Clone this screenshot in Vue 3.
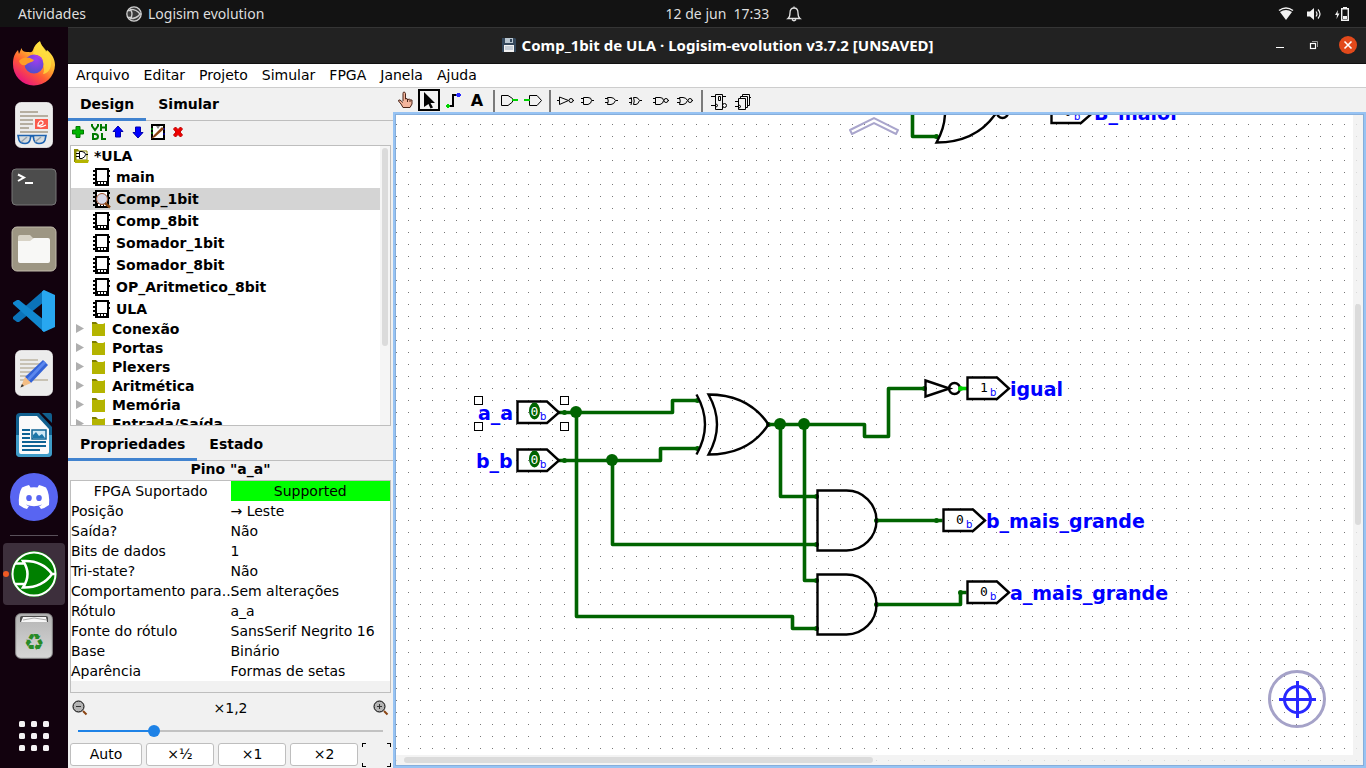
<script setup>
import { ref } from 'vue'

const menus = ['Arquivo', 'Editar', 'Projeto', 'Simular', 'FPGA', 'Janela', 'Ajuda']
const circuits = ['main', 'Comp_1bit', 'Comp_8bit', 'Somador_1bit', 'Somador_8bit', 'OP_Aritmetico_8bit', 'ULA']
const current = ref('Comp_1bit')
const libraries = ['Conexão', 'Portas', 'Plexers', 'Aritmética', 'Memória', 'Entrada/Saída']
const attributes = [
  ['Posição', '→ Leste'],
  ['Saída?', 'Não'],
  ['Bits de dados', '1'],
  ['Tri-state?', 'Não'],
  ['Comportamento para...', 'Sem alterações'],
  ['Rótulo', 'a_a'],
  ['Fonte do rótulo', 'SansSerif Negrito 16'],
  ['Base', 'Binário'],
  ['Aparência', 'Formas de setas'],
]
const zoom = ref(24)

const wires = [
  'M558 412H672V400H697',
  'M576 412V616H792V628H817',
  'M558 460H660V448H697',
  'M612 460V544H817',
  'M768 424H864V436H888V388H924',
  'M780 424V496H817',
  'M804 424V580H817',
  'M876 520H942',
  'M876 604H960V592H966',
  'M912 100V136H937',
]
const joints = [[576, 412], [612, 460], [780, 424], [804, 424]]
const ends = [
  [564, 412], [564, 460], [697, 400], [697, 448], [768, 424], [924, 388], [816, 496], [816, 544],
  [816, 580], [816, 628], [876, 520], [936, 520], [876, 604], [960, 592], [936, 136],
]
const inputs = [
  { x: 517, y: 412, label: 'a_a', lx: 478 },
  { x: 517, y: 460, label: 'b_b', lx: 476 },
]
const outputs = [
  { x: 967, y: 388, label: 'igual', value: '1' },
  { x: 943, y: 520, label: 'b_mais_grande', value: '0' },
  { x: 967, y: 592, label: 'a_mais_grande', value: '0' },
  { x: 1051, y: 112, label: 'B_maior', value: '0' },
]
const handles = [[474, 396], [560, 396], [474, 422], [560, 422]]
</script>

<template>
  <div class="desktop">
    <header class="topbar">
      <div class="top-left">
        <button class="plain">Atividades</button>
        <button class="plain app-name">
          <svg width="16" height="16" viewBox="0 0 48 48">
            <circle cx="24" cy="24" r="21.500" fill="#3c3c3c" stroke="#d0d0d0" stroke-width="4" />
            <path d="M5 14H15M5 34H15M13 10Q23 24 13 38Q32 38 42 24Q32 10 13 10ZM42 24H46" fill="none" stroke="#d0d0d0" stroke-width="4" />
          </svg>
          Logisim evolution
        </button>
      </div>
      <button class="plain clock">
        <span>12 de jun&nbsp; 17:33</span>
        <svg width="16" height="16" viewBox="0 0 16 16" fill="none" stroke="#e2e2e2" stroke-width="1.300">
          <path d="M2 12.500C4 11 4 9.500 4 7C4 3.500 5.500 2 8 2S12 3.500 12 7C12 9.500 12 11 14 12.500ZM6 13.500Q8 16 10 13.500M8 2V.5" />
        </svg>
      </button>
      <button class="plain tray" aria-label="Sistema">
        <svg width="16" height="16" viewBox="0 0 16 16"><path d="M1 4.500Q8-.5 15 4.500" fill="none" stroke="#f2f2f2" stroke-width="1.500" /><path d="M2 6Q8 2 14 6L8 14Z" fill="#f2f2f2" /></svg>
        <svg width="16" height="16" viewBox="0 0 16 16"><path d="M1 5.500H4L8 2V14L4 10.500H1Z" fill="#f2f2f2" /><path d="M10 5.500Q12 8 10 10.500M12 3.500Q16 8 12 12.500" fill="none" stroke="#f2f2f2" stroke-width="1.200" /></svg>
        <svg width="16" height="16" viewBox="0 0 16 16"><path d="M4 4L1 9H3L2.500 13L5.500 7.500H3.500Z" fill="#f2f2f2" /><path d="M7.700 2.700H14.300V14.300H7.700Z" fill="none" stroke="#f2f2f2" stroke-width="1.400" /><path d="M9 1H13V2H9ZM9 10H13V13H9Z" fill="#f2f2f2" /></svg>
      </button>
    </header>

    <div class="below">
      <nav class="dock">
        <button class="dock-item" aria-label="Firefox">
          <svg viewBox="0 0 48 48">
            <defs>
              <linearGradient id="fx" x1=".85" y1=".1" x2=".25" y2=".95"><stop offset="0" stop-color="#fff04a" /><stop offset=".35" stop-color="#ffb52c" /><stop offset=".65" stop-color="#ff5b34" /><stop offset="1" stop-color="#e8157f" /></linearGradient>
              <radialGradient id="fxg" cx=".6" cy=".25" r=".8"><stop offset="0" stop-color="#a13df0" /><stop offset="1" stop-color="#4c50c8" /></radialGradient>
            </defs>
            <path d="M3 25C3 18 5 14 8 11L9 15L11.500 9Q12 13 17 13C20 13 22 14 23 11C24 7 27 4 30 2.300C31 7 35 10 36 13L37 11C42 15 45 20 45 26A21 21 0 0 1 3 25Z" fill="url(#fx)" />
            <path d="M23 16C24 8 27 4 30 2.300C31 8 40 13 41 22C42 30 37 35 33 35C36 29 33 20 23 16Z" fill="#ffe040" opacity=".75" />
            <circle cx="24" cy="25" r="9.500" fill="url(#fxg)" />
            <path d="M9 22C12 18 18 17 24 21C22 24 18 23 16 26C12 27 10 25 9 22Z" fill="#ff9d28" />
            <path d="M23 16Q31 15 33 22L29 19Z" fill="#b13ce8" />
          </svg>
        </button>
        <button class="dock-item" aria-label="Visualizador de documentos">
          <svg viewBox="0 0 48 48">
            <rect x="5.700" y="1.700" width="36.600" height="44.600" rx="5" fill="#ececec" stroke="#fafafa" />
            <path d="M10 11H28M10 15H38M10 19H23M10 23H23M10 27H19M10 31H38" stroke="#b5aea0" stroke-width="2" />
            <rect x="25" y="18" width="13" height="10" fill="#fb5a4c" />
            <path d="M27 25Q34 24 33 21Q30 18 28 23Q28 28 36 24" fill="none" stroke="#fff" stroke-width="1.200" />
            <path d="M8 34.500H21L20 39Q19 42.500 15 42.500Q10 42.500 9 39ZM23 34.500H36L35 39Q34 42.500 29 42.500Q25 42.500 24 39ZM20 36Q22 34 24 36" fill="#d5dadd" stroke="#1e63b0" stroke-width="1.600" />
            <path d="M11 41L17 36M25 41L31 36" stroke="#98a4ad" stroke-width="1.500" />
          </svg>
        </button>
        <button class="dock-item" aria-label="Terminal">
          <svg viewBox="0 0 48 48">
            <rect x="2" y="6" width="44" height="36" rx="4" fill="#4c4c4c" stroke="#777" />
            <path d="M8 11.500L14 14.500L8 18M15 20H23" fill="none" stroke="#fff" stroke-width="2" />
          </svg>
        </button>
        <button class="dock-item" aria-label="Arquivos">
          <svg viewBox="0 0 48 48">
            <rect x="2" y="2" width="44" height="44" rx="5" fill="#9d9683" stroke="#c2bcac" />
            <path d="M8 12Q8 10 10 10H20L23 13H30V20H8Z" fill="#d8d3c6" />
            <path d="M8 16H20L24 13H38Q40 13 40 15V36Q40 38 38 38H10Q8 38 8 36Z" fill="#f8f8f6" />
          </svg>
        </button>
        <button class="dock-item" aria-label="Visual Studio Code">
          <svg viewBox="0 0 48 48">
            <path d="M34 3L3 30V32L7 35L9 35L34 15Z" fill="#0b73b9" />
            <path d="M3 17V15.500L7 13H9L34 33V45Z" fill="#1187cf" />
            <path d="M34 3L45 8V40L34 45L32 43.500V4.500Z" fill="#28a7f0" />
          </svg>
        </button>
        <button class="dock-item" aria-label="Editor de texto">
          <svg viewBox="0 0 48 48">
            <rect x="5.700" y="1.700" width="36.600" height="44.600" rx="5" fill="#ececec" stroke="#fafafa" />
            <path d="M10 11H28M10 15H32M10 19H26M10 23H22M10 27H18M10 31H38" stroke="#c8c2b4" stroke-width="2" />
            <path d="M33 11L38 16L21 34L15 28Z" fill="#3563d6" /><path d="M34 12L36 14L19 32L17 30Z" fill="#5b87ee" />
            <path d="M15 28L21 34L10.500 38.500Z" fill="#f3bd84" /><path d="M12 35L14 37L10.500 38.500Z" fill="#333" />
          </svg>
        </button>
        <button class="dock-item" aria-label="LibreOffice Writer">
          <svg viewBox="0 0 48 48">
            <path d="M10 2H29L42 16V42Q42 46 38 46H10Q6 46 6 42V6Q6 2 10 2Z" fill="#11608f" />
            <path d="M6 24H42V42Q42 46 38 46H10Q6 46 6 42Z" fill="#3f9cc8" />
            <path d="M11 5H27L39 18V41Q39 43 37 43H11Q9 43 9 41V7Q9 5 11 5Z" fill="#fafafa" />
            <path d="M32 2H40Q42 2 42 5V12Z" fill="#11608f" />
            <path d="M12 19H20M12 23H20M12 27H20M12 31H36M12 35H36M12 39H30" stroke="#0f6394" stroke-width="2" />
            <rect x="22" y="19" width="14" height="9" fill="#cfe8f5" stroke="#0f6394" stroke-width="1.500" />
            <path d="M23 27V24L26 21L29 25L32 23L35 27Z" fill="#1c75a8" />
          </svg>
        </button>
        <button class="dock-item" aria-label="Discord">
          <svg viewBox="0 0 48 48">
            <circle cx="24" cy="24" r="24" fill="#5865f2" />
            <path d="M19 12L20.500 14.500Q24 14 27.500 14.500L29 12Q32 12.500 36 14.500Q40 21 39 32Q35 35 31 36L29 33Q31 32.500 32 31.500Q24 35 16 31.500Q17 32.500 19 33L17 36Q13 35 9 32Q8 21 12 14.500Q16 12.500 19 12Z" fill="#fff" />
            <ellipse cx="19" cy="25" rx="2.800" ry="3.100" fill="#5865f2" /><ellipse cx="29" cy="25" rx="2.800" ry="3.100" fill="#5865f2" />
          </svg>
        </button>
        <hr />
        <button class="dock-item active" aria-label="Logisim evolution">
          <svg viewBox="0 0 48 48">
            <circle cx="24" cy="24" r="22.500" fill="#008000" stroke="#0a8a0a" />
            <circle cx="24" cy="24" r="21.500" fill="none" stroke="#fff" stroke-width="2" />
            <path d="M5 13.500H15M5 34H15M13 11Q22 24 13 37.500Q32 38 42 24Q32 10 13 11ZM42 24H46" fill="none" stroke="#fff" stroke-width="2.500" />
          </svg>
        </button>
        <button class="dock-item" aria-label="Lixeira">
          <svg viewBox="0 0 48 48">
            <defs><linearGradient id="tr" x2="0" y2="1"><stop offset="0" stop-color="#b4b4b4" /><stop offset="1" stop-color="#d6d6d6" /></linearGradient></defs>
            <rect x="5.700" y="1.700" width="36.600" height="44.600" rx="5" fill="url(#tr)" stroke="#8e8e8e" />
            <path d="M10 10V6Q10 4 12 4H36Q38 4 38 6V10Z" fill="#4c4c4c" />
            <path d="M11 10L13 5L36 5L37 10Z" fill="#f6f6f6" /><path d="M13 8L24 6L37 8" fill="none" stroke="#aaa" />
            <text x="24" y="38" text-anchor="middle" font-family="DejaVu Sans, sans-serif" font-size="23" fill="#278a27">♻</text>
          </svg>
        </button>
        <button class="dock-item apps" aria-label="Mostrar aplicativos">
          <svg viewBox="0 0 48 48" fill="#f4f2f3">
            <g v-for="r in 3" :key="r"><rect v-for="c in 3" :key="c" :x="c * 12 - 3" :y="r * 12 - 3" width="6" height="6" rx="1.500" /></g>
          </svg>
        </button>
      </nav>

      <section class="window">
        <div class="titlebar">
          <h1>
            <svg width="16" height="16" viewBox="0 0 16 16"><path d="M1 1H14L15 2V15H1Z" fill="#35485c" /><rect x="4" y="1" width="8" height="5" fill="#b9c6d0" /><rect x="9" y="2" width="2" height="3" fill="#35485c" /><rect x="3" y="8" width="10" height="7" fill="#f2f2f2" /><path d="M4 10H12M4 12H12" stroke="#9ab" /></svg>
            Comp_1bit de ULA · Logisim-evolution v3.7.2 [UNSAVED]
          </h1>
          <div class="controls">
            <button aria-label="Minimizar"><svg width="18" height="18" viewBox="0 0 18 18"><path d="M5 11.500H13" stroke="#fff" /></svg></button>
            <button aria-label="Restaurar"><svg width="18" height="18" viewBox="0 0 18 18" fill="none"><path d="M7 5.500H12.500V11" stroke="#999" /><rect x="5.500" y="7.500" width="5" height="5" stroke="#fff" stroke-width="1.200" /></svg></button>
            <button class="close" aria-label="Fechar"><svg width="18" height="18" viewBox="0 0 18 18"><path d="M5.500 5.500L12.500 12.500M12.500 5.500L5.500 12.500" stroke="#fff" stroke-width="1.600" /></svg></button>
          </div>
        </div>

        <nav class="menubar"><button v-for="m in menus" :key="m">{{ m }}</button></nav>

        <div class="workspace">
          <aside class="side">
            <div class="tabs">
              <button class="on">Design</button><button>Simular</button>
            </div>
            <div class="tree-tools">
              <button aria-label="Adicionar circuito"><svg width="16" height="16" viewBox="0 0 16 16"><path d="M6 2.500H10V6H13.500V10H10V13.500H6V10H2.500V6H6Z" fill="#00b400" stroke="#007a00" /></svg></button>
              <button class="vhdl" aria-label="Adicionar VHDL"><svg width="18" height="18" viewBox="0 0 18 18" fill="none" stroke="#007800" stroke-width="2"><path d="M2 1V3L5 7L8 3V1M11 1V8M16 1V8M11 4.500H16M3 11V16H5Q8 16 8 13.500T5 11ZM12 10V16H16" /></svg></button>
              <button aria-label="Mover para cima"><svg width="16" height="16" viewBox="0 0 16 16"><path d="M8 2L13 7.500H10.500V13H5.500V7.500H3Z" fill="#00f" stroke="#0000b0" /></svg></button>
              <button aria-label="Mover para baixo"><svg width="16" height="16" viewBox="0 0 16 16"><path d="M8 14L3 8.500H5.500V3H10.500V8.500H13Z" fill="#00f" stroke="#0000b0" /></svg></button>
              <button class="look" aria-label="Editar aparência"><svg width="16" height="16" viewBox="0 0 16 16"><rect x="2" y="1" width="12" height="14" fill="#fff" stroke="#000" stroke-width="2" /><path d="M6 2H10L8 5Z" fill="#888" /><path d="M1 5H3M1 9H3" stroke="#0c0" /><path d="M13 5H15M13 10H15" stroke="#00f" /><path d="M1 15L4 11L12 3L14 5L5 13Z" fill="#8b4513" /></svg></button>
              <button aria-label="Remover"><svg width="16" height="16" viewBox="0 0 16 16"><path d="M3.500 5L5.500 3L8 5.500L10.500 3L12.500 5L10 8L12.500 11L10.500 13L8 10.500L5.500 13L3.500 11L6 8Z" fill="#f00000" stroke="#c00000" /></svg></button>
            </div>

            <div class="tree">
              <ul>
                <li class="root">
                  <svg width="16" height="16" viewBox="0 0 16 16"><path d="M0 1H4L5 3H2V14H0Z" fill="#8a8a00" /><path d="M2 3H13V12H2Z" fill="#fff" stroke="#8a8a00" /><path d="M1 12H15L14 15H1Z" fill="#b4b400" /><path d="M5.500 3.500H8Q11.500 4 11.500 6.500T8 10.500H5.500ZM2 5.500H5M2 8.500H5M12 6.500H14" fill="#fff" stroke="#000" /></svg>
                  *ULA
                </li>
                <li v-for="c in circuits" :key="c" class="circuit" :class="{ selected: c === current }" @click="current = c">
                  <svg width="20" height="20" viewBox="0 0 20 20">
                    <g shape-rendering="crispEdges">
                      <path d="M3 1H17V19H3ZM1 3H18V5H1ZM1 7H3V9H1ZM17 8H18V10H17ZM1 11H3V13H1ZM1 15H3V17H1Z" />
                      <path d="M5 3H15V14H5ZM6 15H8V17H6ZM9 15H11V17H9ZM12 15H14V17H12Z" fill="#fff" />
                    </g>
                    <g v-if="c === current"><circle cx="10" cy="10" r="5.500" fill="#d4d4e6" fill-opacity=".9" stroke="#a0522d" /><path d="M13 14L18 18.500" stroke="#8b4513" stroke-width="2.500" /></g>
                  </svg>
                  {{ c }}
                </li>
                <li v-for="l in libraries" :key="l" class="library">
                  <svg width="8" height="9" viewBox="0 0 8 9"><path d="M0 0L8 4.500L0 9Z" fill="#afafaf" /></svg>
                  <svg width="13" height="15" viewBox="0 0 13 15"><path d="M0 1H4L6 3H0Z" fill="#7c7c00" /><path d="M0 3H11L13 2V15H0Z" fill="#b4b400" /></svg>
                  {{ l }}
                </li>
              </ul>
              <div class="tree-scroll"><i></i></div>
            </div>

            <div class="tabs lower">
              <button class="on">Propriedades</button><button>Estado</button>
            </div>
            <h2>Pino "a_a"</h2>
            <div class="props">
              <table>
                <thead><tr><th scope="col">FPGA Suportado</th><th scope="col" class="ok">Supported</th></tr></thead>
                <tbody><tr v-for="[k, v] in attributes" :key="k"><th scope="row">{{ k }}</th><td>{{ v }}</td></tr></tbody>
              </table>
            </div>

            <div class="zoom-head">
              <button aria-label="Reduzir"><svg width="16" height="16" viewBox="0 0 16 16"><circle cx="6.500" cy="6.500" r="5.500" fill="#b4b4b4" stroke="#000" /><path d="M4 6.500H9" stroke="#333" /><path d="M11 11L14.500 14.500" stroke="#8b4513" stroke-width="2" /></svg></button>
              <label for="zoom">×1,2</label>
              <button aria-label="Ampliar"><svg width="16" height="16" viewBox="0 0 16 16"><circle cx="6.500" cy="6.500" r="5.500" fill="#b4b4b4" stroke="#000" /><path d="M4 6.500H9M6.500 4V9" stroke="#333" /><path d="M11 11L14.500 14.500" stroke="#8b4513" stroke-width="2" /></svg></button>
            </div>
            <input id="zoom" v-model="zoom" type="range" min="0" max="100" :style="{ '--fill': zoom + '%' }" />
            <div class="zoom-buttons">
              <button class="auto">Auto</button><button>×½</button><button>×1</button><button>×2</button>
              <button class="fit" aria-label="Ajustar"><svg width="29" height="24" viewBox="0 0 29 24" fill="none" stroke="#000" shape-rendering="crispEdges"><path d="M.5 4V.5H4M25 .5H28.500V4M28.500 20V23.500H25M4 23.500H.5V20" /></svg></button>
            </div>
          </aside>

          <main class="editor">
            <div class="toolbar">
              <button aria-label="Interagir"><svg viewBox="0 0 22 22"><path d="M9 12V4.500Q9 3 10 3T11.500 4.500V10L13 9.500L14 10.500L15.500 10L16.500 11L18 11V15L16 18.500H9L7 15L4.500 12Q4.500 10.500 6 11L9 13.500" fill="#f2b49c" stroke="#4a2418" /><path d="M13.500 10V13M16 11V13" stroke="#4a2418" /></svg></button>
              <button class="picked" aria-label="Selecionar"><svg viewBox="0 0 22 22"><path d="M6 3L17 14H12.500L15 18.500L12.500 19.500L10.500 15L6 18Z" fill="#000" /></svg></button>
              <button aria-label="Conexões"><svg viewBox="0 0 22 22" shape-rendering="crispEdges"><path d="M6 17H11V6H17" fill="none" stroke="#000" stroke-width="2" /><path d="M4 16H8V18H4ZM5 15H7V19H5Z" fill="#00d200" /><path d="M14 5H19V7H14ZM15 4H18V8H15Z" fill="#2828ff" /></svg></button>
              <button class="letter" aria-label="Texto">A</button>
              <hr />
              <button aria-label="Pino de entrada"><svg viewBox="0 0 22 22" fill="none" stroke="#000"><path d="M3.500 6.500H10L14.500 9.500V13L10 16.500H3.500Z" /><path d="M14 11H20" stroke="#00d200" stroke-width="2" /></svg></button>
              <button aria-label="Pino de saída"><svg viewBox="0 0 22 22" fill="none" stroke="#000"><path d="M7.500 6.500H15L19.500 11.500L15 16.500H7.500Z" /><path d="M2 11H8" stroke="#00d200" stroke-width="2" /></svg></button>
              <hr />
              <button aria-label="Porta NOT"><svg viewBox="0 0 22 22" fill="none" stroke="#000"><path d="M3 11.500H5.500V8L14.500 11.500L5.500 15.500V11.500M19 11.500H20" /><circle cx="17" cy="11.500" r="2" /></svg></button>
              <button aria-label="Porta AND"><svg viewBox="0 0 22 22" fill="none" stroke="#000"><path d="M5.500 8.500H10Q13.500 8.500 13.500 11.500T10 15.500H5.500ZM3 9.500H5M3 13.500H5M14 11.500H16" /></svg></button>
              <button aria-label="Porta OR"><svg viewBox="0 0 22 22" fill="none" stroke="#000"><path d="M5.500 8.500H9Q12 8.500 13.500 11.500Q12 15.500 9 15.500H5.500Q7 12 5.500 8.500ZM3 9.500H6M3 13.500H6M14 11.500H16" /></svg></button>
              <button aria-label="Porta XOR"><svg viewBox="0 0 22 22" fill="none" stroke="#000"><path d="M7.500 8.500H10Q12 8.500 13.500 11.500Q12 15.500 10 15.500H7.500Q9 12 7.500 8.500ZM5 8Q6.500 12 5 16M3 9.500H6M3 13.500H6M14 11.500H16" /></svg></button>
              <button aria-label="Porta NAND"><svg viewBox="0 0 22 22" fill="none" stroke="#000"><path d="M5.500 8.500H10Q13.500 8.500 13.500 11.500T10 15.500H5.500ZM3 9.500H5M3 13.500H5M18 11.500H19" /><circle cx="16" cy="11.500" r="2" /></svg></button>
              <button aria-label="Porta NOR"><svg viewBox="0 0 22 22" fill="none" stroke="#000"><path d="M5.500 8.500H9Q12 8.500 13.500 11.500Q12 15.500 9 15.500H5.500Q7 12 5.500 8.500ZM3 9.500H6M3 13.500H6M18 11.500H19" /><circle cx="16" cy="11.500" r="2" /></svg></button>
              <hr />
              <button aria-label="Flip-flop D"><svg viewBox="0 0 22 22" fill="none" stroke="#000"><path d="M9.500 5.500H16.500V20.500H9.500ZM5 7.500H9M5 16.500H9M9.500 14.500L12 16.500L9.500 18.500M17 7.500H20M12.500 7.500H14.500V11.500H12.500Z" /><circle cx="18.500" cy="16.500" r="2" /></svg></button>
              <button aria-label="Registrador"><svg viewBox="0 0 22 22" fill="none" stroke="#000"><path d="M8.500 9.500H15.500V20.500H8.500ZM10.500 9V7.500H17.500V18.500H16M12.500 7V5.500H19.500V16.500H18M5 12.500H8M5 17.500H8M8.500 15.500L11 17.500L8.500 19.500M20 8.500H21" /></svg></button>
            </div>

            <div class="canvas">
              <svg class="sheet" width="100%" height="100%">
                <defs>
                  <pattern id="dots" width="12" height="12" patternUnits="userSpaceOnUse"><rect x="0" y="4" width="1" height="1" fill="#777" /></pattern>
                </defs>
                <g transform="translate(-396 -115)">
                  <rect x="396" y="115" width="100%" height="100%" fill="url(#dots)" />
                  <g transform="translate(.5 .5)">
                    <path v-for="w in wires" :key="w" class="wire" :d="w" />
                    <circle v-for="e in ends" :key="e.join()" class="joint" :cx="e[0]" :cy="e[1]" r="2.500" />
                    <circle v-for="j in joints" :key="j.join()" class="joint" :cx="j[0] - 0.5" :cy="j[1] - 0.5" r="6" />
                    <path class="gate" d="M696 394Q713 424 696 454M708 394Q725 424 708 454Q748 454 768 424Q748 394 708 394Z" />
                    <path class="gate" d="M936 82Q953 112 936 142Q976 142 996 112Q976 82 936 82Z" />
                    <circle class="gate" cx="1002" cy="112" r="5.500" />
                    <path class="gate" d="M817 490H846A30 30 0 0 1 846 550H817ZM817 574H846A30 30 0 0 1 846 634H817Z" />
                    <path class="gate" d="M925 380L949 388L925 396Z" />
                    <circle class="gate" cx="954" cy="388" r="5.500" />
                    <path class="wire high" d="M960 388H967" />
                    <circle class="high-end" cx="960" cy="388" r="2.500" />
                  </g>
                  <g v-for="p in inputs" :key="p.label">
                    <path class="gate" :transform="`translate(${p.x} ${p.y})`" d="M.5-10.500H30L42 .5L30 11H.5Z" />
                    <ellipse class="joint" :cx="p.x + 17.5" :cy="p.y - 1" rx="5.500" ry="8.500" />
                    <text class="bit lit" :x="p.x + 17.5" :y="p.y + 4">0</text>
                    <text class="radix" :x="p.x + 23" :y="p.y + 8">b</text>
                    <text class="label" :x="p.lx" :y="p.y + 8">{{ p.label }}</text>
                  </g>
                  <g v-for="p in outputs" :key="p.label">
                    <path class="gate" :transform="`translate(${p.x} ${p.y})`" d="M.5-10.500H30L42 .5L30 11H.5Z" />
                    <text class="bit" :x="p.x + 17" :y="p.y + 4">{{ p.value }}</text>
                    <text class="radix" :x="p.x + 23" :y="p.y + 8">b</text>
                    <text class="label" :x="p.x + 43" :y="p.y + 8">{{ p.label }}</text>
                  </g>
                  <rect v-for="h in handles" :key="h.join()" :x="h[0] + 0.5" :y="h[1] + 0.5" width="8" height="8" fill="#fff" stroke="#000" />
                </g>
              </svg>
              <button class="go-up" aria-label="Ir para cima"><svg width="50" height="19" viewBox="0 0 50 19" fill="none" stroke="#a9a5cc" stroke-width="2"><path d="M1 14L25 2L49 14L47 18L25 7L3 18Z" /></svg></button>
              <button class="center" aria-label="Centralizar"><svg width="58" height="58" viewBox="0 0 58 58" fill="none"><circle cx="29" cy="29" r="27.500" stroke="#a5a2c8" stroke-width="3" /><circle cx="29.500" cy="29.500" r="13" stroke="#2828ff" stroke-width="3" /><path d="M11 29.500H48M29.500 11V48" stroke="#2828ff" stroke-width="3" /></svg></button>
              <div class="vbar"><i></i></div>
              <div class="hbar"><i></i></div>
            </div>
          </main>
        </div>
      </section>
    </div>
  </div>
</template>

<style>
html, body { margin: 0; background: #12020e; }
</style>

<style scoped>
* { box-sizing: border-box; }
button { font: inherit; color: inherit; background: none; border: 0; padding: 0; margin: 0; }
svg { display: block; flex: none; }
.desktop { height: 100vh; min-height: 700px; display: flex; flex-direction: column; overflow: hidden; font-family: "DejaVu Sans", sans-serif; font-size: 14px; color: #000; }

.topbar { height: 27px; flex: none; background: #131313; color: #dedede; display: grid; grid-template-columns: 1fr auto 1fr; align-items: center; padding: 0 16px 0 18px; font-family: "Noto Sans", sans-serif; font-size: 14px; }
.plain { display: flex; align-items: center; white-space: nowrap; }
.top-left { display: flex; gap: 40px; }
.app-name { gap: 6px; }
.clock { gap: 17px; margin-left: 100px; }
.tray { gap: 12px; justify-self: end; }

.below { flex: 1; min-height: 0; display: flex; }
.dock { width: 68px; flex: none; background: #12020e; display: flex; flex-direction: column; align-items: center; padding: 5px 3px 1px; }
.dock-item { width: 62px; height: 62px; flex: none; display: flex; align-items: center; justify-content: center; border-radius: 4px; position: relative; }
.dock-item svg { width: 48px; height: 48px; }
.dock hr { width: 48px; border: 0; height: 1px; background: #59505a; margin: 7px 0; }
.active { background: #3d2f3c; }
.active::before { content: ""; position: absolute; left: 0; top: 28px; width: 6px; height: 6px; border-radius: 3px; background: #f05a24; }
.apps { margin-top: auto; }

.window { flex: 1; min-width: 0; display: flex; flex-direction: column; background: #f1f1f1; }
.titlebar { height: 37px; flex: none; background: #222; border-top: 1px solid #353535; border-bottom: 1px solid #111; display: grid; grid-template-columns: 1fr auto 1fr; align-items: center; padding-bottom: 2px; color: #fff; }
.titlebar h1 { grid-column: 2; margin: 0; display: flex; align-items: center; gap: 5px; font-family: "Noto Sans", sans-serif; font-size: 15px; line-height: 20px; font-weight: 700; white-space: nowrap; }
.controls { justify-self: end; display: flex; gap: 16px; padding-right: 9px; }
.controls button { border-radius: 9px; }
.close { background: #e2491b; }

.menubar { height: 24px; flex: none; background: #fff; border-bottom: 1px solid #cdcdcd; display: flex; gap: 14px; padding-left: 8px; }
.menubar button { height: 22px; }
.workspace { flex: 1; min-height: 0; display: flex; }

.side { width: 325px; flex: none; display: flex; flex-direction: column; }
.tabs { height: 33px; flex: none; display: flex; box-shadow: inset 0 -1px #bebebe; font-weight: 700; }
.tabs button { padding: 2px 12px 0; border-bottom: 3px solid transparent; }
.tabs .on { border-color: #4183cf; }
.lower { height: 35px; }
.lower button { padding-top: 4px; }
.tree-tools { height: 24px; flex: none; display: flex; align-items: center; padding: 0 2px 2px; gap: 4px; }
.vhdl { margin-right: -2px; }
.tree { flex: 1; min-height: 0; margin: 0 2px; border: 1px solid #bebebe; background: #fff; display: flex; overflow: hidden; font-weight: 700; }
.tree ul { flex: 1; margin: 0; padding: 0; list-style: none; }
.tree li { display: flex; align-items: center; height: 22px; white-space: nowrap; }
.tree .root { height: 20px; padding-left: 3px; gap: 4px; }
.tree .circuit { padding-left: 21px; gap: 4px; }
.selected { background: #d4d4d4; }
.tree .library { height: 19px; padding: 0 0 2px 5px; gap: 8px; }
.library svg + svg { margin-right: -1px; }
.tree-scroll { width: 10px; background: #f5f5f5; padding: 2px; }
.tree-scroll i { display: block; height: 72%; border-radius: 3px; background: #dbdbdb; }

.side h2 { margin: 0; flex: none; height: 19px; line-height: 17px; font-size: 14px; font-weight: 700; text-align: center; }
.props { flex: none; margin: 0 2px; border: 1px solid #bebebe; padding-bottom: 11px; }
table { width: 100%; border-collapse: collapse; table-layout: fixed; background: #fff; }
th, td { height: 20px; padding: 0; font-weight: 400; text-align: left; line-height: 20px; white-space: nowrap; }
thead th { text-align: center; }
.ok { background: #0f0; }

.zoom-head { height: 32px; flex: none; display: flex; align-items: center; justify-content: space-between; padding: 0 4px 2px; }
input[type="range"] { appearance: none; height: 12px; margin: 0 10px; background: linear-gradient(#1e82e6, #1e82e6) 0 5px / var(--fill) 2px no-repeat, linear-gradient(#c2c2c2, #c2c2c2) 0 5px / 100% 2px no-repeat; }
input[type="range"]::-webkit-slider-thumb { appearance: none; width: 12px; height: 12px; border-radius: 6px; background: #1e82e6; }
.zoom-buttons { flex: none; display: flex; gap: 4px; padding: 6px 2px 2px; }
.zoom-buttons button { flex: 1; height: 23px; padding-bottom: 2px; background: #fff; border: 1px solid #bebebe; border-radius: 3px; }
.zoom-buttons .auto { flex: none; width: 72px; }
.zoom-buttons .fit { flex: none; padding: 0; background: none; border: 0; }

.editor { flex: 1; min-width: 0; display: flex; flex-direction: column; }
.toolbar { height: 24px; flex: none; display: flex; gap: 2px; padding: 1px; }
.toolbar button { width: 22px; height: 22px; flex: none; }
.toolbar svg { width: 22px; height: 22px; }
.toolbar .picked { border: 2px solid #000; }
.picked svg { margin: -2px; }
.toolbar hr { width: 2px; height: 22px; margin: 1px 1px 0 3px; border: 0; background: #7a7a7a; }
.toolbar .letter { font-size: 16px; font-weight: 700; }

.canvas { flex: 1; min-height: 0; position: relative; border: 2px solid #97c3f3; outline: 1px solid #86aedb; outline-offset: -3px; padding: 1px; background: #fff; overflow: hidden; }
.sheet { font-family: "DejaVu Sans", sans-serif; }
.wire { fill: none; stroke: #006400; stroke-width: 3.6; stroke-linejoin: round; }
.high { stroke: #00d200; }
.high-end { fill: #00d200; }
.joint { fill: #006400; }
.gate { fill: none; stroke: #000; stroke-width: 2.4; }
.bit { font-family: "DejaVu Sans Mono", monospace; font-size: 13px; text-anchor: middle; }
.lit { fill: #fff; }
.radix { font-size: 10px; fill: #00f; }
.label { font-size: 19px; font-weight: 700; fill: #00f; }
.go-up, .center { position: absolute; }
.go-up { top: 2px; left: calc(50% - 31px); }
.center { right: 38px; bottom: 38px; }
.vbar, .hbar { position: absolute; background: rgba(240, 240, 240, .8); }
.vbar { top: 1px; right: 1px; bottom: 1px; width: 10px; }
.hbar { left: 1px; right: 11px; bottom: 1px; height: 10px; }
.vbar i, .hbar i { position: absolute; border-radius: 3px; background: #dbdbdb; }
.vbar i { left: 2px; width: 6px; top: 29%; height: 34%; }
.hbar i { top: 2px; height: 6px; left: 8px; width: 49%; }
</style>
